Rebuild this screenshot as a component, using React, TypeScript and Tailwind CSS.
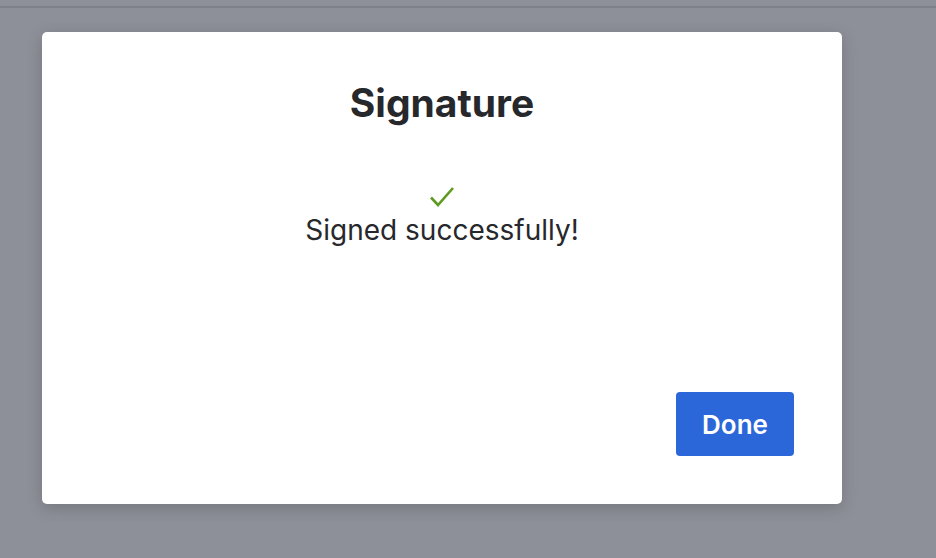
import React from 'react';

const App = () => {
  return (
    <div
      className="w-[936px] h-[558px] bg-[#8d9098] flex flex-col overflow-hidden"
      style={{ fontFamily: 'Inter, "Noto Sans", sans-serif' }}
    >
      <div className="h-[6px]" />
      <div className="h-[2px] bg-[#7e818a]" />
      <div className="pt-[24px] pl-[42px]">
        <div className="w-[800px] h-[472px] bg-white rounded-[5px] shadow-[0_4px_16px_rgba(0,0,0,0.18)] flex flex-col px-[48px] pb-[48px]">
          <h1 className="mt-[47px] text-center text-[39px] leading-[48px] font-bold text-[#27282c]">
            Signature
          </h1>
          <div className="mt-[59px] flex flex-col items-center">
            <svg width="26" height="22" viewBox="0 0 26 22" fill="none">
              <path d="M2 11.5 L9 19 L24 2" stroke="#5f9b21" strokeWidth="2.6" />
            </svg>
            <p className="mt-[5px] text-[28px] leading-[34px] text-[#27282c]">
              Signed successfully!
            </p>
          </div>
          <div className="mt-auto flex justify-end">
            <button className="w-[118px] h-[64px] rounded-[4px] bg-[#2b67d9] text-white text-[26px] font-semibold">
              Done
            </button>
          </div>
        </div>
      </div>
    </div>
  );
};

export default App;
